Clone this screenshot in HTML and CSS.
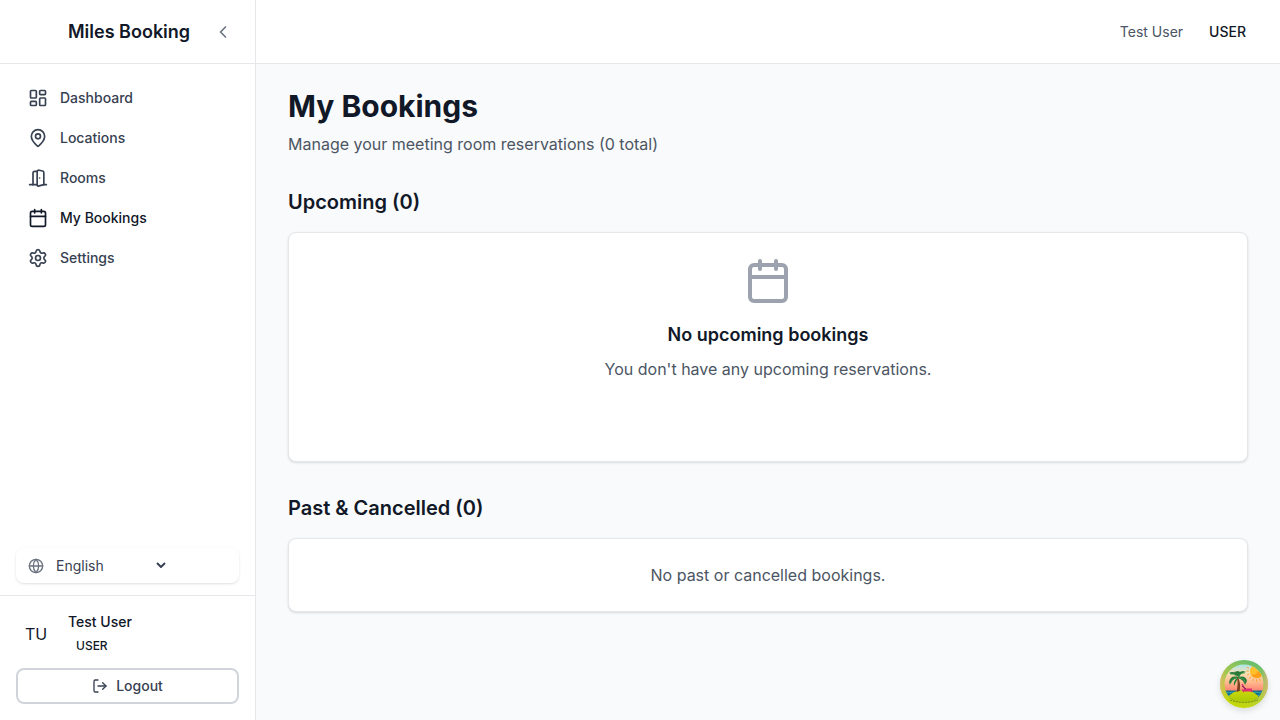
FILE: index.html
```html
<!DOCTYPE html>
<html lang="en">
<head>
<meta charset="utf-8">
<title>Miles Booking</title>
<link rel="stylesheet" href="styles.css">
</head>
<body>
<div class="app">
  <aside class="sidebar">
    <div class="brand">
      <span class="brand-name">Miles Booking</span>
      <svg class="icon brand-toggle" viewBox="0 0 24 24"><path d="m15 18-6-6 6-6"/></svg>
    </div>
    <nav class="nav">
      <a class="nav-item"><svg class="icon" viewBox="0 0 24 24"><rect width="7" height="9" x="3" y="3" rx="1"/><rect width="7" height="5" x="14" y="3" rx="1"/><rect width="7" height="9" x="14" y="12" rx="1"/><rect width="7" height="5" x="3" y="16" rx="1"/></svg>Dashboard</a>
      <a class="nav-item"><svg class="icon" viewBox="0 0 24 24"><path d="M20 10c0 4.993-5.539 10.193-7.399 11.799a1 1 0 0 1-1.202 0C9.539 20.193 4 14.993 4 10a8 8 0 0 1 16 0"/><circle cx="12" cy="10" r="3"/></svg>Locations</a>
      <a class="nav-item"><svg class="icon" viewBox="0 0 24 24"><path d="M11 20H2"/><path d="M11 4.562v16.157a1 1 0 0 0 1.242.97L19 20V5.562a2 2 0 0 0-1.515-1.94l-4-1A2 2 0 0 0 11 4.561z"/><path d="M11 4H8a2 2 0 0 0-2 2v14"/><path d="M14 12h.01"/><path d="M22 20h-3"/></svg>Rooms</a>
      <a class="nav-item active"><svg class="icon" viewBox="0 0 24 24"><path d="M8 2v4"/><path d="M16 2v4"/><rect width="18" height="18" x="3" y="4" rx="2"/><path d="M3 10h18"/></svg>My Bookings</a>
      <a class="nav-item"><svg class="icon" viewBox="0 0 24 24"><path d="M9.671 4.136a2.34 2.34 0 0 1 4.659 0 2.34 2.34 0 0 0 3.319 1.915 2.34 2.34 0 0 1 2.33 4.033 2.34 2.34 0 0 0 0 3.831 2.34 2.34 0 0 1-2.33 4.033 2.34 2.34 0 0 0-3.319 1.915 2.34 2.34 0 0 1-4.659 0 2.34 2.34 0 0 0-3.32-1.915 2.34 2.34 0 0 1-2.33-4.033 2.34 2.34 0 0 0 0-3.831A2.34 2.34 0 0 1 6.35 6.051a2.34 2.34 0 0 0 3.319-1.915"/><circle cx="12" cy="12" r="3"/></svg>Settings</a>
    </nav>
    <div class="language">
      <svg class="icon small" viewBox="0 0 24 24"><circle cx="12" cy="12" r="10"/><path d="M12 2a14.5 14.5 0 0 0 0 20 14.5 14.5 0 0 0 0-20"/><path d="M2 12h20"/></svg>
      <span class="language-name">English</span>
      <svg class="caret" viewBox="0 0 10 6"><path d="m1 1 4 4 4-4"/></svg>
    </div>
    <div class="account">
      <div class="profile">
        <div class="avatar">TU</div>
        <div class="identity">
          <span class="profile-name">Test User</span>
          <span class="profile-role">USER</span>
        </div>
      </div>
      <button class="logout"><svg class="icon small" viewBox="0 0 24 24"><path d="m16 17 5-5-5-5"/><path d="M21 12H9"/><path d="M9 21H5a2 2 0 0 1-2-2V5a2 2 0 0 1 2-2h4"/></svg>Logout</button>
    </div>
  </aside>
  <div class="content">
    <header class="topbar"><span class="topbar-name">Test User</span><span class="topbar-role">USER</span></header>
    <main class="main">
      <h1 class="title">My Bookings</h1>
      <p class="subtitle">Manage your meeting room reservations (0 total)</p>
      <h2 class="section-title">Upcoming (0)</h2>
      <section class="card upcoming">
        <svg class="icon large" viewBox="0 0 24 24"><path d="M8 2v4"/><path d="M16 2v4"/><rect width="18" height="18" x="3" y="4" rx="2"/><path d="M3 10h18"/></svg>
        <h3 class="empty-title">No upcoming bookings</h3>
        <p class="empty-text">You don't have any upcoming reservations.</p>
      </section>
      <h2 class="section-title">Past &amp; Cancelled (0)</h2>
      <section class="card past"><p class="empty-text">No past or cancelled bookings.</p></section>
    </main>
  </div>
</div>
<div class="devtools">
  <svg class="island" viewBox="0 0 48 48">
    <defs>
      <linearGradient id="rim" x1=".75" y1="0" x2=".35" y2="1"><stop offset="0" stop-color="#58bd72"/><stop offset=".25" stop-color="#8fc35c"/><stop offset=".65" stop-color="#b5ce3c"/><stop offset="1" stop-color="#c5d900"/></linearGradient>
      <linearGradient id="edge" x1="0" x2="1"><stop offset="0" stop-color="#efb083" stop-opacity=".65"/><stop offset=".13" stop-color="#efb083" stop-opacity="0"/><stop offset=".87" stop-color="#efb083" stop-opacity="0"/><stop offset="1" stop-color="#efb083" stop-opacity=".7"/></linearGradient>
      <linearGradient id="sky" x1="0" y1="0" x2="0" y2="1"><stop offset=".08" stop-color="#a5e4ee"/><stop offset=".27" stop-color="#f7e2b9"/><stop offset=".45" stop-color="#ffbd91"/><stop offset=".65" stop-color="#ff8270"/></linearGradient>
      <linearGradient id="sand" x1="0" y1="0" x2="0" y2="1"><stop offset="0" stop-color="#cbd80b"/><stop offset="1" stop-color="#8bbd00"/></linearGradient>
      <clipPath id="view"><circle cx="24" cy="24" r="19.5"/></clipPath>
      <clipPath id="ground"><path d="M0 0h48v39q-24 6-48 0z"/></clipPath>
    </defs>
    <circle cx="24" cy="24" r="24" fill="url(#rim)"/>
    <circle cx="24" cy="24" r="24" fill="url(#edge)"/>
    <g clip-path="url(#view)">
      <g clip-path="url(#ground)">
        <rect width="48" height="48" fill="url(#sky)"/>
        <g fill="none" stroke="#ff9f2b" stroke-width=".9" stroke-linecap="round"><path d="m28.7 8-1.5-.6M28.4 11l-1.7.2M29 14l-1.6.9M30.8 16.8l-1.2 1.6M33.4 18.8l-.6 1.9M36.5 19.6l.1 1.9M39.5 18.9l.7 1.7"/></g>
        <circle cx="36.5" cy="11.4" r="6.6" fill="#ffc02b"/>
        <path d="M31 15q8 0 9-10l4 5-3 7q-6 3-10-2" fill="#ff9f18"/>
        <rect y="30.5" width="48" height="10" fill="#12708a"/>
        <path d="m3 33 3-1 3 1 3-1 3 1M33 33l3-1 3 1 3-1 3 1M2 36l3-1 3 1 3-1M37 36l3-1 3 1 3-1" fill="none" stroke="#43b6bd" stroke-width=".8"/>
        <ellipse cx="23.5" cy="41" rx="16.5" ry="10.7" fill="url(#sand)"/>
      </g>
      <path d="M18 17q3 6 1.7 14l-3.2 1q2-8 .3-15z" fill="#7b4022"/>
      <g fill="#28793a"><path d="M17 17q-2-7-8-4l2 1q4-.5 6 3M18 17q0-6 5-6l3 1q-6 1-7 6M17 17q-6-2-8 5l1 3q1-5 7-7M18 17q8-2 9 4l-2 4q-1-5-7-7M17 18q-4 3-3 8l2-4 2-4M18 17l-4-5 4-1 2 1z"/></g>
      <path d="M18 17q3-5 7-4M17 17q-3-4-7-3M17 18q-5 0-6 5M18 18q6-1 7 4" fill="none" stroke="#48a44c" stroke-width=".8"/>
      <path d="m22 24 3 5 7 .2M22 30l10 1M25 29l-2 3M31 29l1 3" fill="none" stroke="#e02f73" stroke-width="1.4"/>
      <path d="m22 26 4 3" stroke="#702c4f" stroke-width="1"/>
    </g>
    <path d="M10 40q14 5 28 0" fill="none" stroke="#577f00" stroke-width=".8" stroke-dasharray="2 1"/>
  </svg>
</div>
</body>
</html>
```
FILE: styles.css
```css
* { box-sizing: border-box; margin: 0; padding: 0; }
body { font-family: Inter, sans-serif; font-size: 16px; line-height: 24px; color: #111827; background: #f9fafb; }
.app { display: flex; height: 720px; overflow: hidden; }
.icon { width: 20px; height: 20px; flex: none; fill: none; stroke: currentColor; stroke-width: 2; stroke-linecap: round; stroke-linejoin: round; }
.icon.small { width: 16px; height: 16px; }
.icon.large { width: 48px; height: 48px; color: #9ca3af; }
.sidebar { width: 256px; flex: none; display: flex; flex-direction: column; background: #fff; border-right: 1px solid #e5e7eb; }
.brand { height: 64px; flex: none; display: flex; align-items: center; justify-content: space-between; padding: 0 22px 0 68px; border-bottom: 1px solid #e5e7eb; }
.brand-name { font-size: 18px; line-height: 28px; font-weight: 600; }
.brand-toggle { color: #6b7280; }
.nav { flex: 1; display: flex; flex-direction: column; gap: 4px; padding: 16px; }
.nav-item { height: 36px; display: flex; align-items: center; gap: 12px; padding: 0 12px; font-size: 14px; line-height: 20px; font-weight: 500; color: #374151; }
.nav-item.active { color: #111827; }
.language { height: 35px; display: flex; align-items: flex-start; gap: 12px; margin: 0 16px 12px; padding: 8px 12px 0; border-radius: 8px; box-shadow: 0 1px 3px rgba(0,0,0,.1), 0 1px 2px -1px rgba(0,0,0,.1); font-size: 14px; line-height: 20px; color: #374151; }
.language .icon { margin-top: 2px; color: #6b7280; }
.language-name { width: 88px; }
.caret { width: 10px; height: 6px; margin-top: 6px; fill: none; stroke: #374151; stroke-width: 2; }
.account { display: flex; flex-direction: column; gap: 12px; padding: 16px; border-top: 1px solid #e5e7eb; }
.profile { display: flex; align-items: center; gap: 12px; height: 44px; }
.avatar { width: 40px; text-align: center; }
.identity { display: flex; flex-direction: column; align-items: flex-start; gap: 4px; }
.profile-name { font-size: 14px; line-height: 20px; font-weight: 500; }
.profile-role { padding: 2px 8px; font-size: 12px; line-height: 16px; font-weight: 500; }
.logout { height: 36px; display: flex; align-items: center; justify-content: center; gap: 8px; border: 2px solid #d1d5db; border-radius: 8px; background: #fff; font: 500 14px/20px Inter, sans-serif; color: #374151; }
.content { flex: 1; min-width: 0; }
.topbar { height: 64px; display: flex; align-items: center; justify-content: flex-end; gap: 16px; padding: 0 24px; background: #fff; border-bottom: 1px solid #e5e7eb; font-size: 14px; line-height: 20px; }
.topbar-name { color: #4b5563; }
.topbar-role { padding: 0 10px; font-weight: 500; }
.main { padding: 24px 32px; }
.title { font-size: 30px; line-height: 36px; font-weight: 700; }
.subtitle { margin-top: 8px; color: #4b5563; }
.section-title { margin: 32px 0 16px; font-size: 20px; line-height: 28px; font-weight: 600; }
.card { display: flex; flex-direction: column; align-items: center; background: #fff; border: 1px solid #e5e7eb; border-radius: 8px; box-shadow: 0 1px 3px rgba(0,0,0,.1), 0 1px 2px -1px rgba(0,0,0,.1); }
.upcoming { height: 230px; padding-top: 24px; }
.past { padding: 24px; }
.empty-title { margin: 16px 0 8px; font-size: 18px; line-height: 28px; font-weight: 600; }
.empty-text { color: #4b5563; }
.devtools { position: fixed; right: 12px; bottom: 12px; width: 48px; height: 48px; border-radius: 50%; box-shadow: 0 3px 6px rgba(0,0,0,.12); }
.island { display: block; width: 48px; height: 48px; }
```
